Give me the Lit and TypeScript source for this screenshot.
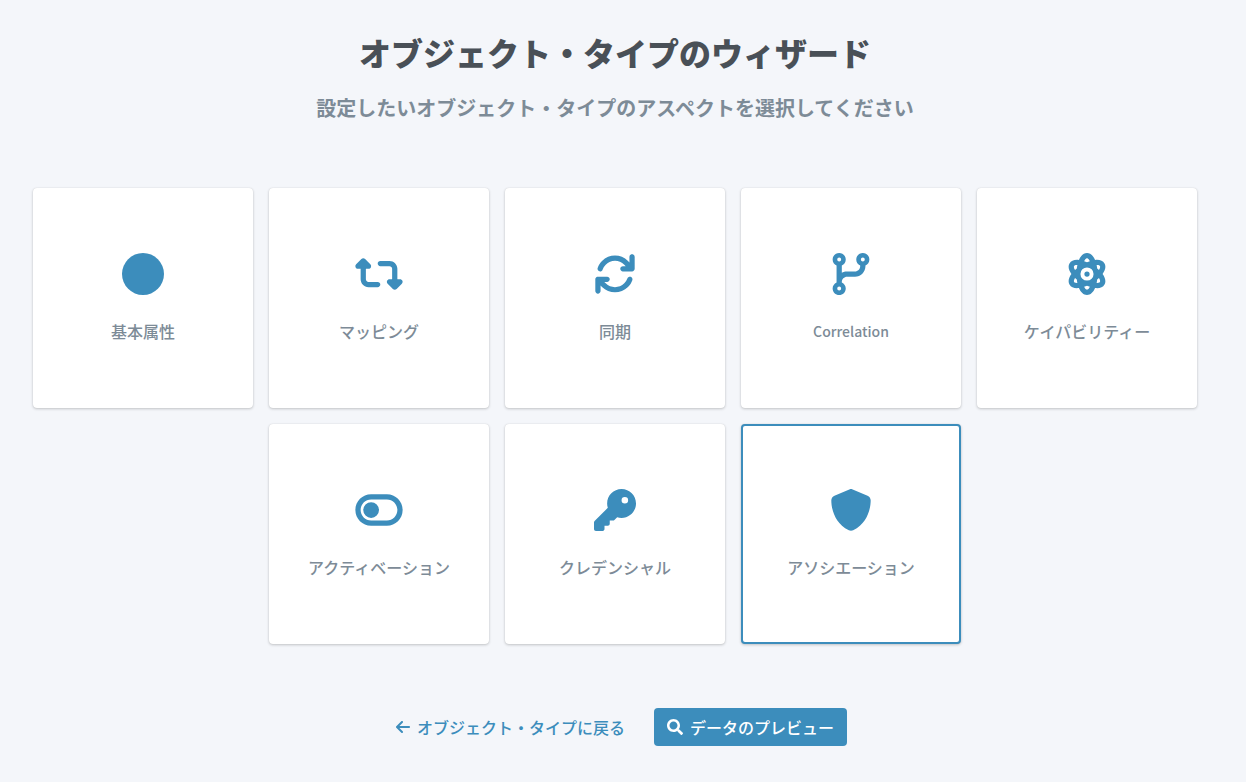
import { LitElement, html, css, svg } from "lit";
import { customElement, property, state } from "lit/decorators.js";
import { classMap } from "lit/directives/class-map.js";

interface Glyph {
  width: number;
  path: string;
}

const glyphs: Record<string, Glyph> = {
  circle: { width: 512, path: "M256 512A256 256 0 1 0 256 0a256 256 0 1 0 0 512z" },
  retweet: {
    width: 576,
    path: "M272 416c17.7 0 32-14.3 32-32s-14.3-32-32-32H160c-17.7 0-32-14.3-32-32V192h32c12.9 0 24.6-7.8 29.6-19.8s2.2-25.7-6.9-34.9l-64-64c-12.5-12.5-32.8-12.5-45.3 0l-64 64c-9.2 9.2-11.9 22.9-6.9 34.9s16.6 19.8 29.6 19.8l32 0 0 128c0 53 43 96 96 96H272zM304 96c-17.7 0-32 14.3-32 32s14.3 32 32 32l112 0c17.7 0 32 14.3 32 32l0 128H416c-12.9 0-24.6 7.8-29.6 19.8s-2.2 25.7 6.9 34.9l64 64c12.5 12.5 32.8 12.5 45.3 0l64-64c9.2-9.2 11.9-22.9 6.9-34.9s-16.6-19.8-29.6-19.8l-32 0V192c0-53-43-96-96-96L304 96z",
  },
  rotate: {
    width: 512,
    path: "M105.1 202.6c7.7-21.8 20.2-42.3 37.8-59.8c62.5-62.5 163.8-62.5 226.3 0L386.3 160H352c-17.7 0-32 14.3-32 32s14.3 32 32 32H463.5c0 0 0 0 0 0h.4c17.7 0 32-14.3 32-32V48c0-17.7-14.3-32-32-32s-32 14.3-32 32v67.2L414.4 97.6c-87.5-87.5-229.3-87.5-316.8 0C73.2 122 55.6 150.7 44.8 181.4c-5.9 16.7 2.9 34.9 19.5 40.8s34.9-2.9 40.8-19.5zM39 289.3c-5 1.5-9.8 4.2-13.7 8.2c-4 4-6.7 8.8-8.1 14c-.3 1.2-.6 2.5-.8 3.8c-.3 1.7-.4 3.4-.4 5.1V464c0 17.7 14.3 32 32 32s32-14.3 32-32V396.9l17.6 17.5 0 0c87.5 87.4 229.3 87.4 316.7 0c24.4-24.4 42.1-53.1 52.9-83.7c5.9-16.7-2.9-34.9-19.5-40.8s-34.9 2.9-40.8 19.5c-7.7 21.8-20.2 42.3-37.8 59.8c-62.5 62.5-163.8 62.5-226.3 0l-.1-.1L125.6 352H160c17.7 0 32-14.3 32-32s-14.3-32-32-32H48.4c-1.6 0-3.2 .1-4.8 .3s-3.1 .5-4.6 1z",
  },
  branch: {
    width: 448,
    path: "M80 104a24 24 0 1 0 0-48 24 24 0 1 0 0 48zm80-24c0 32.8-19.7 61-48 73.3v87.8c18.8-10.9 40.7-17.1 64-17.1h96c35.3 0 64-28.7 64-64v-6.7C307.7 141 288 112.8 288 80c0-44.2 35.8-80 80-80s80 35.8 80 80c0 32.8-19.7 61-48 73.3V160c0 70.7-57.3 128-128 128H176c-35.3 0-64 28.7-64 64v6.7c28.3 12.3 48 40.5 48 73.3c0 44.2-35.8 80-80 80s-80-35.8-80-80c0-32.8 19.7-61 48-73.3V352 153.3C19.7 141 0 112.8 0 80C0 35.8 35.8 0 80 0s80 35.8 80 80zm232 0a24 24 0 1 0-48 0 24 24 0 1 0 48 0zM80 456a24 24 0 1 0 0-48 24 24 0 1 0 0 48z",
  },
  atom: {
    width: 512,
    path: "M256 398.8c-11.8 5.1-23.4 9.7-34.9 13.5c16.7 33.8 31 35.7 34.9 35.7s18.1-1.9 34.9-35.7c-11.4-3.9-23.1-8.4-34.9-13.5zM446 256c33 45.2 44.3 90.9 23.6 128c-20.2 36.3-62.5 49.3-115.2 43.2c-22 52.1-55.6 84.8-98.4 84.8s-76.4-32.7-98.4-84.8c-52.7 6.1-95-6.8-115.2-43.2C21.7 346.9 33 301.2 66 256c-33-45.2-44.3-90.9-23.6-128c20.2-36.3 62.5-49.3 115.2-43.2C179.6 32.7 213.2 0 256 0s76.4 32.7 98.4 84.8c52.7-6.1 95 6.8 115.2 43.2c20.7 37.1 9.4 82.8-23.6 128zm-65.8 67.4c-1.7 14.2-3.9 28-6.7 41.2c31.8 1.4 38.6-8.7 40.2-11.7c2.3-4.2 7-17.9-11.9-48.1c-6.8 6.3-14 12.5-21.6 18.6zm-6.7-175.9c2.8 13.1 5 26.9 6.7 41.2c7.6 6.1 14.8 12.3 21.6 18.6c18.9-30.2 14.2-44 11.9-48.1c-1.6-2.9-8.4-13-40.2-11.7zM290.9 99.7C274.1 65.9 259.9 64 256 64s-18.1 1.9-34.9 35.7c11.4 3.9 23.1 8.4 34.9 13.5c11.8-5.1 23.4-9.7 34.9-13.5zm-159 88.9c1.7-14.3 3.9-28 6.7-41.2c-31.8-1.4-38.6 8.7-40.2 11.7c-2.3 4.2-7 17.9 11.9 48.1c6.8-6.3 14-12.5 21.6-18.6zM110.2 304.8C91.4 335 96 348.7 98.3 352.9c1.6 2.9 8.4 13 40.2 11.7c-2.8-13.1-5-26.9-6.7-41.2c-7.6-6.1-14.8-12.3-21.6-18.6zM336 256a80 80 0 1 0 -160 0 80 80 0 1 0 160 0zm-80-32a32 32 0 1 1 0 64 32 32 0 1 1 0-64z",
  },
  toggle: {
    width: 576,
    path: "M384 128c70.7 0 128 57.3 128 128s-57.3 128-128 128H192c-70.7 0-128-57.3-128-128s57.3-128 128-128H384zM576 256c0-106-86-192-192-192H192C86 64 0 150 0 256S86 448 192 448H384c106 0 192-86 192-192zM192 352a96 96 0 1 0 0-192 96 96 0 1 0 0 192z",
  },
  key: {
    width: 512,
    path: "M336 352c97.2 0 176-78.8 176-176S433.2 0 336 0S160 78.8 160 176c0 18.7 2.9 36.8 8.3 53.7L7 391c-4.5 4.5-7 10.6-7 17v80c0 13.3 10.7 24 24 24h80c13.3 0 24-10.7 24-24V448h40c13.3 0 24-10.7 24-24V384h40c6.4 0 12.5-2.5 17-7l33.3-33.3c16.9 5.4 35 8.3 53.7 8.3zM376 96a40 40 0 1 1 0 80 40 40 0 1 1 0-80z",
  },
  shield: {
    width: 512,
    path: "M269.4 2.9C265.2 1 260.7 0 256 0s-9.2 1-13.4 2.9L54.3 82.8c-22 9.3-38.4 31-38.3 57.2c.5 99.2 41.3 280.7 213.6 363.2c16.7 8 36.1 8 52.8 0C454.7 420.7 495.5 239.2 496 140c.1-26.2-16.3-47.9-38.3-57.2L269.4 2.9z",
  },
  arrowLeft: {
    width: 448,
    path: "M9.4 233.4c-12.5 12.5-12.5 32.8 0 45.3l160 160c12.5 12.5 32.8 12.5 45.3 0s12.5-32.8 0-45.3L109.2 288 416 288c17.7 0 32-14.3 32-32s-14.3-32-32-32l-306.7 0L214.6 118.6c12.5-12.5 12.5-32.8 0-45.3s-32.8-12.5-45.3 0l-160 160z",
  },
  search: {
    width: 512,
    path: "M505 442.7L405.3 343c-4.5-4.5-10.6-7-17-7H372c27.6-35.3 44-79.7 44-128C416 93.1 322.9 0 208 0S0 93.1 0 208s93.1 208 208 208c48.3 0 92.7-16.4 128-44v16.3c0 6.4 2.5 12.5 7 17l99.7 99.7c9.4 9.4 24.6 9.4 33.9 0l28.3-28.3c9.4-9.4 9.4-24.6.1-34zM208 336c-70.7 0-128-57.2-128-128 0-70.7 57.2-128 128-128 70.7 0 128 57.2 128 128 0 70.7-57.2 128-128 128z",
  },
};

@customElement("wizard-icon")
class WizardIcon extends LitElement {
  @property() name = "circle";

  static styles = css`
    :host {
      display: block;
      height: 1em;
    }
    .glyph {
      display: block;
      width: var(--glyph-width, auto);
      height: 1em;
      fill: currentColor;
    }
  `;

  render() {
    const glyph = glyphs[this.name];
    return html`<svg class="glyph" viewBox="0 0 ${glyph.width} 512" aria-hidden="true">
      ${svg`<path fill-rule="evenodd" d=${glyph.path}></path>`}
    </svg>`;
  }
}

const tiles = [
  { icon: "circle", label: "基本属性" },
  { icon: "retweet", label: "マッピング" },
  { icon: "rotate", label: "同期" },
  { icon: "branch", label: "Correlation", latin: true },
  { icon: "atom", label: "ケイパビリティー" },
  { icon: "toggle", label: "アクティベーション" },
  { icon: "key", label: "クレデンシャル" },
  { icon: "shield", label: "アソシエーション" },
];

@customElement("app-root")
class AppRoot extends LitElement {
  @state() selected = 7;

  static styles = css`
    :host {
      display: block;
      box-sizing: border-box;
      min-height: 100vh;
      padding: 32px 40px 36px 24px;
      background: #f4f6fa;
      color: #7d8b97;
      font-family: "Noto Sans CJK JP", "Noto Sans", sans-serif;
      font-size: 16px;
      line-height: 24px;
    }
    .heading {
      text-align: center;
    }
    .title {
      margin: 0;
      color: #495057;
      font-size: 32px;
      font-weight: 900;
      line-height: 40px;
    }
    .subtitle {
      margin: 24px 0 0;
      font-size: 20px;
      font-weight: 700;
      line-height: 24px;
    }
    .tiles {
      display: flex;
      flex-wrap: wrap;
      justify-content: center;
      gap: 16px;
      margin-top: 68px;
    }
    .tile {
      display: flex;
      flex-direction: column;
      align-items: center;
      justify-content: center;
      gap: 24px;
      box-sizing: border-box;
      width: 220px;
      height: 220px;
      padding: 0;
      border: 2px solid transparent;
      border-radius: 4px;
      background: #fff border-box;
      box-shadow: 0 0 1px rgba(0, 0, 0, 0.13), 0 1px 3px rgba(0, 0, 0, 0.2);
      color: inherit;
      font: inherit;
      font-weight: 500;
      cursor: pointer;
    }
    .tile.selected {
      border-color: #3c8dbc;
    }
    .tile-icon {
      --glyph-width: 56px;
      color: #3c8dbc;
      font-size: 42px;
    }
    .latin {
      font-size: 14px;
    }
    .actions {
      display: flex;
      flex-wrap: wrap;
      justify-content: center;
      gap: 16px;
      margin: 64px 0 0;
    }
    .action {
      display: flex;
      align-items: center;
      gap: 7px;
      box-sizing: border-box;
      height: 38px;
      padding: 0 13px;
      border: 0;
      border-radius: 4px;
      background: none;
      color: #3c8dbc;
      font: inherit;
      font-weight: 500;
      text-decoration: none;
      cursor: pointer;
    }
    .action.primary {
      background: #3c8dbc;
      color: #fff;
    }
  `;

  render() {
    return html`
      <header class="heading">
        <h1 class="title">オブジェクト・タイプのウィザード</h1>
        <p class="subtitle">設定したいオブジェクト・タイプのアスペクトを選択してください</p>
      </header>
      <main class="tiles">
        ${tiles.map(
          (tile, index) => html`<button
            type="button"
            class=${classMap({ tile: true, selected: index === this.selected })}
            aria-pressed=${index === this.selected}
            @click=${() => (this.selected = index)}
          >
            <wizard-icon class="tile-icon" name=${tile.icon}></wizard-icon>
            <span class=${classMap({ latin: !!tile.latin })}>${tile.label}</span>
          </button>`
        )}
      </main>
      <footer class="actions">
        <a class="action" href="#"
          ><wizard-icon name="arrowLeft"></wizard-icon><span>オブジェクト・タイプに戻る</span></a
        >
        <button type="button" class="action primary">
          <wizard-icon name="search"></wizard-icon><span>データのプレビュー</span>
        </button>
      </footer>
    `;
  }
}
